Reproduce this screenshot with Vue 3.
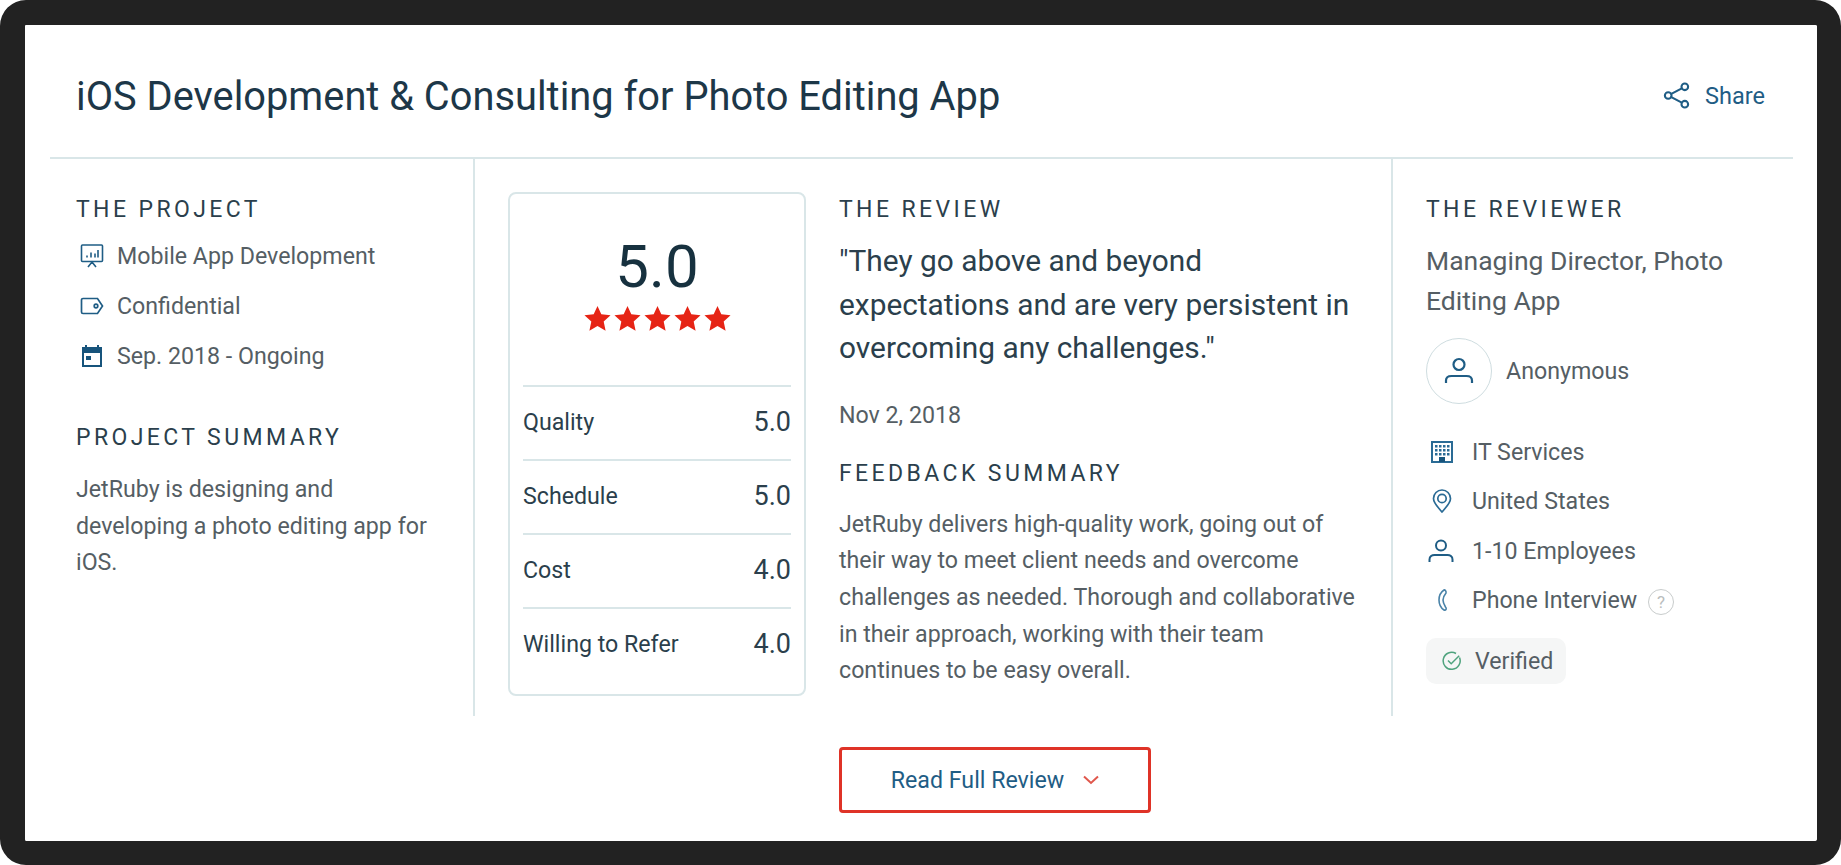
<template>
  <div class="frame">
    <div class="sheet">
      <header class="top">
        <h1>iOS Development &amp; Consulting for Photo Editing App</h1>
        <a class="share">
          <svg width="27" height="27" viewBox="0 0 26 26" fill="none" stroke="#1f5d85" stroke-width="2">
            <circle cx="5" cy="13" r="3.2" />
            <circle cx="21" cy="4.6" r="3.2" />
            <circle cx="21" cy="21.4" r="3.2" />
            <path d="M8 11.4 18.1 6.1M8 14.6 18.1 19.9" />
          </svg>
          <span>Share</span>
        </a>
      </header>

      <div class="cols">
        <section class="col-project">
          <h2>THE PROJECT</h2>
          <ul class="facts">
            <li>
              <svg class="ico" viewBox="0 0 24 24" fill="none" stroke="#1f5d85" stroke-width="1.6">
                <rect x="1.5" y="1" width="21" height="16.5" rx="1" />
                <path d="M7 13.5v-2M11 13.5V8.500M15 13.5V9.500M18 13.500V6M8 23l4-5 4 5" />
              </svg>
              <span>Mobile App Development</span>
            </li>
            <li>
              <svg class="ico" viewBox="0 0 24 24" fill="none" stroke="#1f5d85" stroke-width="1.7">
                <path d="M3 4.500h14.500l5 7.500-5 7.500H3a1.500 1.500 0 0 1-1.500-1.500V6A1.500 1.500 0 0 1 3 4.500z" />
                <circle cx="16" cy="12" r="1.800" />
              </svg>
              <span>Confidential</span>
            </li>
            <li>
              <svg class="ico" viewBox="0 0 24 24" fill="none">
                <path d="M2 3h20v6H2z" fill="#17547c" />
                <path d="M6 1v3M18 1v3" stroke="#17547c" stroke-width="2" />
                <rect x="3" y="4" width="18" height="18" stroke="#17547c" stroke-width="2" />
                <rect x="6" y="12" width="5" height="4" fill="#17547c" />
              </svg>
              <span>Sep. 2018 - Ongoing</span>
            </li>
          </ul>
          <h2 class="summary-head">PROJECT SUMMARY</h2>
          <p class="copy">JetRuby is designing and developing a photo editing app for iOS.</p>
        </section>

        <section class="col-review">
          <div class="score-card">
            <div class="score-top">
              <div class="score-big">5.0</div>
              <div class="stars">
                <svg v-for="n in 5" :key="n" width="27" height="27" viewBox="0 0 24 24">
                  <path d="M12 .8l3.400 7.500 8.200.9-6.100 5.500 1.700 8.100L12 18.700l-7.200 4.100 1.700-8.100L.4 9.200l8.200-.9z" fill="#e62415" />
                </svg>
              </div>
            </div>
            <div v-for="row in scores" :key="row.label" class="score-row">
              <span>{{ row.label }}</span>
              <b>{{ row.value }}</b>
            </div>
          </div>

          <div class="review-text">
            <h2>THE REVIEW</h2>
            <blockquote>"They go above and beyond expectations and are very persistent in overcoming any challenges."</blockquote>
            <div class="date">Nov 2, 2018</div>
            <h2 class="feedback-head">FEEDBACK SUMMARY</h2>
            <p class="copy">JetRuby delivers high-quality work, going out of their way to meet client needs and overcome challenges as needed. Thorough and collaborative in their approach, working with their team continues to be easy overall.</p>
          </div>
        </section>

        <section class="col-reviewer">
          <h2>THE REVIEWER</h2>
          <div class="role">Managing Director, Photo Editing App</div>
          <div class="who">
            <span class="avatar">
              <svg width="30" height="30" viewBox="0 0 30 30" fill="none" stroke="#1f5d85" stroke-width="2.200">
                <circle cx="15" cy="8.500" r="5.500" />
                <path d="M2 27v-2.500c0-3 2.500-4.500 5.500-4.500h15c3 0 5.500 1.500 5.500 4.500V27" />
              </svg>
            </span>
            <span>Anonymous</span>
          </div>
          <ul class="facts reviewer-facts">
            <li>
              <svg class="ico" viewBox="0 0 24 24">
                <path fill-rule="evenodd" fill="#2a6b95" d="M1 1h22v22H1zM3 3v18h6v-4h6v4h6V3z" />
                <g fill="#2a6b95">
                  <rect x="5" y="5" width="2.500" height="2.500" /><rect x="9" y="5" width="2.500" height="2.500" /><rect x="13" y="5" width="2.500" height="2.500" /><rect x="17" y="5" width="2.500" height="2.500" />
                  <rect x="5" y="9" width="2.500" height="2.500" /><rect x="9" y="9" width="2.500" height="2.500" /><rect x="13" y="9" width="2.500" height="2.500" /><rect x="17" y="9" width="2.500" height="2.500" />
                  <rect x="5" y="13" width="2.500" height="2.500" /><rect x="9" y="13" width="2.500" height="2.500" /><rect x="13" y="13" width="2.500" height="2.500" /><rect x="17" y="13" width="2.500" height="2.500" />
                  <rect x="9" y="17" width="6" height="5" fill="#17547c" />
                </g>
              </svg>
              <span>IT Services</span>
            </li>
            <li>
              <svg class="ico" viewBox="0 0 24 24" fill="none" stroke="#2a6b95" stroke-width="1.700">
                <path d="M12 23C8.500 18.500 3.500 14.500 3.500 9.500a8.500 8.500 0 0 1 17 0C20.500 14.500 15.500 18.500 12 23z" stroke-linejoin="round" />
                <circle cx="12" cy="9.500" r="4.200" />
              </svg>
              <span>United States</span>
            </li>
            <li>
              <svg class="ico ico-wide" viewBox="0 0 26 24" fill="none" stroke="#1f5d85" stroke-width="2">
                <circle cx="13" cy="6.500" r="5" />
                <path d="M1.500 23v-2.500c0-3 2.500-4.500 5-4.500h13c2.500 0 5 1.500 5 4.500V23" />
              </svg>
              <span>1-10 Employees</span>
            </li>
            <li>
              <svg class="ico" viewBox="0 0 24 24" fill="none" stroke="#4a83a8" stroke-width="1.600">
                <path d="M14 2c-3 2-5 6-5 10 0 4 2 8 5 10 2 .6 3-1.500 1.500-3-1.500-2.500-2.500-4.500-2.500-7s1-4.500 3-7c.5-1.500-1-3.500-2-3z" />
              </svg>
              <span>Phone Interview</span>
              <span class="hint">?</span>
            </li>
          </ul>
          <div class="verified">
            <svg width="20" height="20" viewBox="0 0 20 20" fill="none" stroke="#4fa37e" stroke-width="1.500">
              <path d="M17.500 6.500A8.500 8.500 0 1 1 14 2.500" />
              <path d="M6 9.500l3.200 3.200 8-8" />
            </svg>
            <span>Verified</span>
          </div>
        </section>
      </div>

      <div class="actions">
        <button type="button" class="more">
          <span>Read Full Review</span>
          <svg width="16" height="10" viewBox="0 0 16 10" fill="none" stroke="#e0574c" stroke-width="2">
            <path d="M1 1.500l7 6.500 7-6.500" />
          </svg>
        </button>
      </div>
    </div>
  </div>
</template>

<script setup>
const scores = [
  { label: 'Quality', value: '5.0' },
  { label: 'Schedule', value: '5.0' },
  { label: 'Cost', value: '4.0' },
  { label: 'Willing to Refer', value: '4.0' }
];
</script>

<style>
html, body {
  margin: 0;
  background: #fff;
}
</style>

<style scoped>
* {
  box-sizing: border-box;
}

.frame {
  width: 1841px;
  height: 865px;
  border: solid #222;
  border-width: 25px 24px 24px 25px;
  border-radius: 26px;
  font-family: Roboto, "Liberation Sans", sans-serif;
  color: #555e64;
  overflow: hidden;
}

.sheet {
  height: 100%;
  padding: 0 24px 0 25px;
  background: #fff;
  border-radius: 3px;
}

.top {
  height: 134px;
  padding: 11px 28px 0 26px;
  display: flex;
  align-items: center;
  justify-content: space-between;
  border-bottom: 2px solid #d9e6e8;
}

h1 {
  margin: 0;
  font-size: 39.800px;
  font-weight: 400;
  color: #1d3748;
}

.share {
  display: flex;
  align-items: center;
  gap: 15px;
  margin-top: -2px;
  font-size: 23.500px;
  color: #1f5d85;
}

.cols {
  display: grid;
  grid-template-columns: 425px 916px 1fr;
  height: 557px;
}

.cols section {
  padding-top: 37px;
}

h2 {
  margin: 0;
  font-size: 23px;
  line-height: 28px;
  font-weight: 400;
  letter-spacing: 3.400px;
  color: #2b3f4c;
}

.col-project {
  padding-left: 26px;
  border-right: 2px solid #d9e6e8;
}

.facts {
  list-style: none;
  margin: 0;
  padding: 0;
  font-size: 23.200px;
}

.facts li {
  display: flex;
  align-items: center;
  height: 50px;
  gap: 13px;
}

.col-project .facts {
  margin-top: 7px;
}

.ico {
  width: 24px;
  height: 24px;
  flex: none;
  margin-left: 4px;
}

.ico-wide {
  width: 26px;
  margin-left: 2px;
}

.summary-head {
  margin-top: 43px;
}

.copy {
  margin: 19px 0 0;
  font-size: 23.200px;
  line-height: 36.700px;
}

.col-project .copy {
  width: 360px;
}

.col-review {
  display: flex;
  padding-left: 33px;
}

.score-card {
  width: 298px;
  height: 504px;
  margin-top: -4px;
  padding: 0 13px;
  border: 2px solid #d9e6e8;
  border-radius: 8px;
  flex: none;
  color: #2b3f4c;
}

.score-top {
  height: 191px;
  padding-top: 43px;
  text-align: center;
}

.score-big {
  font-size: 60px;
  line-height: 60px;
  color: #17313f;
}

.stars {
  display: flex;
  justify-content: center;
  margin-top: 8px;
  gap: 3px;
}

.score-row {
  display: flex;
  align-items: center;
  justify-content: space-between;
  height: 74px;
  padding-bottom: 3px;
  border-top: 2px solid #d9e6e8;
  font-size: 23.200px;
}

.score-row b {
  font-weight: 400;
  font-size: 27px;
}

.review-text {
  margin-left: 33px;
  width: 524px;
}

blockquote {
  margin: 15px 0 0;
  font-size: 29.850px;
  line-height: 43.500px;
  color: #2b3f4c;
}

.date {
  margin-top: 30px;
  font-size: 23.200px;
  line-height: 30px;
}

.feedback-head {
  margin-top: 30px;
}

.review-text .copy {
  margin-top: 18px;
}

.col-reviewer {
  padding-left: 33px;
  border-left: 2px solid #d9e6e8;
}

.role {
  margin-top: 17px;
  font-size: 26.500px;
  line-height: 40px;
}

.who {
  display: flex;
  align-items: center;
  gap: 14px;
  margin-top: 17px;
  font-size: 23.200px;
}

.avatar {
  width: 66px;
  height: 66px;
  border: 1px solid #cfdde0;
  border-radius: 50%;
  display: flex;
  align-items: center;
  justify-content: center;
}

.reviewer-facts {
  margin-top: 23px;
}

.reviewer-facts li {
  height: 49.500px;
  gap: 18px;
}

.hint {
  width: 26px;
  height: 26px;
  margin-left: -7px;
  margin-top: 4px;
  border: 1.500px solid #c8cccc;
  border-radius: 50%;
  color: #b9bdbd;
  font-size: 17px;
  display: flex;
  align-items: center;
  justify-content: center;
}

.verified {
  display: inline-flex;
  align-items: center;
  gap: 13px;
  width: 140px;
  height: 46px;
  margin-top: 13px;
  padding-left: 16px;
  background: #f5f6f6;
  border-radius: 10px;
  font-size: 23.200px;
}

.actions {
  padding-left: 789px;
  padding-top: 31px;
}

.more {
  width: 312px;
  height: 66px;
  display: flex;
  align-items: center;
  justify-content: center;
  gap: 19px;
  padding: 0;
  background: #fff;
  border: 3px solid #df3327;
  border-radius: 4px;
  font: inherit;
  font-size: 23.200px;
  color: #1f5d85;
}
</style>
